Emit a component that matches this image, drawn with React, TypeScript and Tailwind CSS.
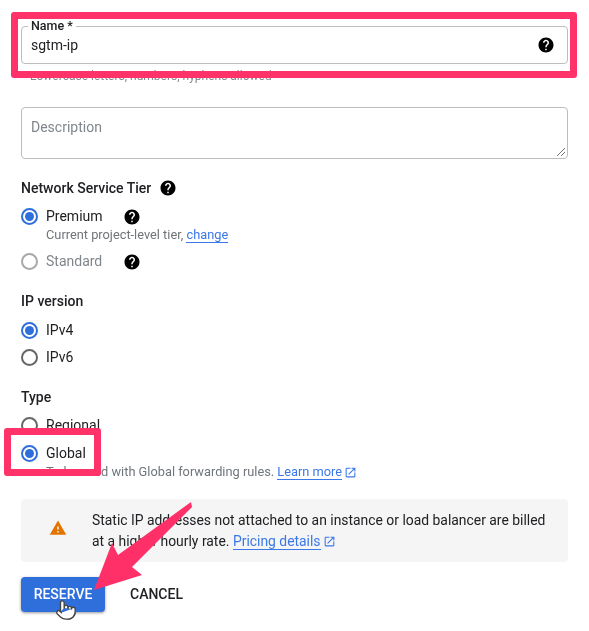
import { Pointer } from 'lucide-react';

const font = 'font-["Roboto",sans-serif]';

function Help({ className = '' }: { className?: string }) {
  return (
    <svg viewBox="0 0 24 24" className={`w-[18px] h-[18px] ${className}`} fill="#000">
      <path d="M12 2C6.48 2 2 6.48 2 12s4.48 10 10 10 10-4.48 10-10S17.52 2 12 2zm1 17h-2v-2h2v2zm2.07-7.75l-.9.92C13.45 12.9 13 13.5 13 15h-2v-.5c0-1.1.45-2.1 1.17-2.83l1.24-1.26c.37-.36.59-.86.59-1.41 0-1.1-.9-2-2-2s-2 .9-2 2H8c0-2.21 1.79-4 4-4s4 1.79 4 4c0 .88-.36 1.68-.93 2.25z" />
    </svg>
  );
}

function External() {
  return (
    <svg viewBox="0 0 24 24" className="w-[13px] h-[13px] ml-[2px] inline-block" fill="#3b78e7">
      <path d="M19 19H5V5h7V3H5a2 2 0 0 0-2 2v14a2 2 0 0 0 2 2h14c1.1 0 2-.9 2-2v-7h-2v7zM14 3v2h3.59l-9.83 9.83 1.41 1.41L19 6.41V10h2V3h-7z" />
    </svg>
  );
}

function Radio({ label, checked, muted, help }: { label: string; checked?: boolean; muted?: boolean; help?: boolean }) {
  return (
    <div className="flex items-center h-[27px]">
      {checked ? (
        <span className="w-[17px] h-[17px] rounded-full border-2 border-[#2f6fdb] flex items-center justify-center">
          <span className="w-[9px] h-[9px] rounded-full bg-[#2f6fdb]" />
        </span>
      ) : (
        <span className={`w-[17px] h-[17px] rounded-full border-2 ${muted ? 'border-[#a8a8a8]' : 'border-[#666666]'}`} />
      )}
      <span className={`ml-[8px] text-[14px] ${muted ? 'text-[#80868b]' : 'text-[#202124]'}`}>{label}</span>
      {help && <Help className="absolute left-[123px]" />}
    </div>
  );
}

export default function App() {
  return (
    <div className={`relative w-[589px] h-[631px] bg-white overflow-hidden blur-[0.4px] ${font}`}>
      <div className="px-[21px] pt-[26px]">
        {/* Name */}
        <div className="relative h-[38px] w-[547px] border border-[#bdbdbd] rounded flex items-center justify-between pl-[9px] pr-[12px]">
          <span className="absolute left-[6px] -top-[8px] bg-white px-[3px] text-[12.5px] leading-[14px] font-medium text-[#202124]">Name *</span>
          <span className="text-[14px] text-[#202124]">sgtm-ip</span>
          <Help />
        </div>
        <p className="text-[12px] leading-[14px] mt-[5px] ml-[9px] text-[#80868b]">Lowercase letters, numbers, hyphens allowed</p>

        {/* Description */}
        <div className="relative h-[52px] w-[547px] mt-[24px] border border-[#bdbdbd] rounded pl-[9px] pt-[10px] text-[14px] leading-[18px] text-[#80868b]">
          Description
          <svg viewBox="0 0 10 10" className="absolute right-[1px] bottom-[1px] w-[10px] h-[10px]" stroke="#757575" strokeWidth="1">
            <path d="M1 9 9 1M5 9 9 5" />
          </svg>
        </div>

        {/* Network Service Tier */}
        <div className="flex items-center mt-[20px] h-[18px]">
          <h2 className="text-[14px] font-medium text-[#202124]">Network Service Tier</h2>
          <Help className="ml-[8px]" />
        </div>
        <div className="mt-[6px]">
          <Radio label="Premium" checked help />
          <p className="ml-[25px] -mt-[3px] text-[12.8px] leading-[16px] text-[#70757a]">
            Current project-level tier, <span className="text-[#3b78e7] border-b border-[#3b78e7]">change</span>
          </p>
          <div className="mt-[5px]">
            <Radio label="Standard" muted help />
          </div>
        </div>

        {/* IP version */}
        <h2 className="mt-[17px] text-[14px] leading-[18px] font-medium text-[#202124]">IP version</h2>
        <div className="mt-[7px]">
          <Radio label="IPv4" checked />
          <Radio label="IPv6" />
        </div>

        {/* Type */}
        <h2 className="mt-[17px] text-[14px] leading-[18px] font-medium text-[#202124]">Type</h2>
        <div className="mt-[6px] flex flex-col gap-px">
          <Radio label="Regional" />
          <Radio label="Global" checked />
        </div>
        <p className="ml-[25px] -mt-[3px] text-[12.8px] leading-[16px] text-[#70757a]">
          To be used with Global forwarding rules. <span className="text-[#3b78e7] border-b border-[#3b78e7]">Learn more</span>
          <External />
        </p>

        {/* Notice */}
        <div className="mt-[19px] w-[547px] h-[63px] rounded bg-[#f5f5f5] flex items-center pl-[28px] pr-[16px]">
          <svg viewBox="0 0 24 24" className="w-[18px] h-[18px] shrink-0 -mt-[6px]" fill="#e37400">
            <path d="M1 21h22L12 2 1 21zm12-3h-2v-2h2v2zm0-4h-2v-4h2v4z" />
          </svg>
          <p className="ml-[25px] text-[13.9px] leading-[21px] text-[#202124]">
            Static IP addresses not attached to an instance or load balancer are billed at a higher hourly rate.{' '}
            <span className="text-[#3b78e7] border-b border-[#3b78e7]">Pricing details</span>
            <External />
          </p>
        </div>

        {/* Actions */}
        <div className="mt-[15px] flex items-center">
          <button className="w-[84px] h-[35px] rounded bg-[#2f6fdb] text-white text-[14px] font-medium shadow-[0_1px_3px_rgba(0,0,0,0.4)]">RESERVE</button>
          <button className="ml-[25px] text-[14px] font-medium text-[#202124]">CANCEL</button>
        </div>
      </div>

      {/* Annotations */}
      <div className="absolute left-[11px] top-[12px] w-[566px] h-[66px] border-[7px] border-[#ff3269] rounded-[3px]" />
      <div className="absolute left-[4px] top-[428px] w-[97px] h-[48px] border-[7px] border-[#ff3269] rounded-[3px]" />
      <svg className="absolute left-0 top-0" width="589" height="631" viewBox="0 0 589 631">
        <polygon points="191,502 192,507 132,567 142,575 94,590 112,543 118,555" fill="#ff2f68" />
      </svg>
      <Pointer className="absolute left-[55px] top-[598px] w-[22px] h-[24px] fill-white text-[#444444]" strokeWidth={1.5} />
    </div>
  );
}
